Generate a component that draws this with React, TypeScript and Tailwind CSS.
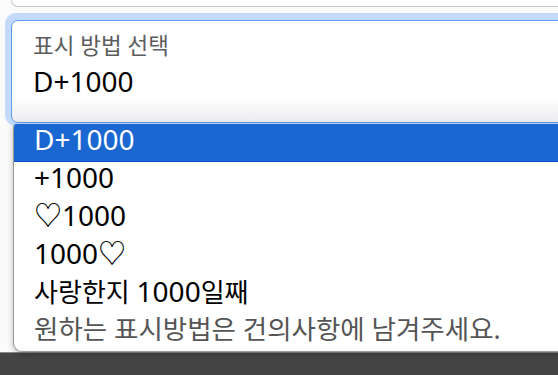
const OPTIONS = ["D+1000", "+1000", "♡1000", "1000♡", "사랑한지 1000일째"];

// Hangul runs are set a bit smaller so they sit next to the Latin digits like in the shot
function Txt({ text }: { text: string }) {
  const parts = text.match(/[\uac00-\ud7a3][\uac00-\ud7a3 .]*|[^\uac00-\ud7a3]+/g) || [];
  return (
    <>
      {parts.map((p, i) =>
        /[\uac00-\ud7a3]/.test(p) ? (
          <span key={i} className="text-[0.93em]">
            {p}
          </span>
        ) : (
          <span key={i}>{p}</span>
        )
      )}
    </>
  );
}

export default function App() {
  const selected = "D+1000";

  return (
    <div
      className="flex h-[375px] w-[558px] flex-col overflow-hidden bg-[#fbfbfb]"
      style={{ fontFamily: '"Noto Sans", "Noto Sans CJK KR", sans-serif' }}
    >
      {/* previous field, only its bottom edge is visible */}
      <div className="-mr-8 ml-[11px] h-[7px] shrink-0 rounded-b-[7px] border border-t-0 border-[#c3c7cc] bg-white" />

      {/* focused select */}
      <div className="-mr-8 ml-[5px] mt-[6px] shrink-0 rounded-[11px] bg-[#c3dafb] pl-[6px] pt-[7px] pb-[3px]">
        <div className="h-[103px] rounded-[7px] border border-[#5e9bf1] bg-gradient-to-b from-white from-75% to-[#ececef] pl-[21px] pt-[11px]">
          <div className="text-[22.5px] leading-[28px] text-[#5c5c5c]">표시 방법 선택</div>
          <div className="mt-[4px] text-[28px] leading-[34px] text-black">{selected}</div>
        </div>
      </div>

      {/* open option list */}
      <div className="relative z-10 -mr-8 -mt-[2px] ml-[13px] h-[228px] shrink-0 overflow-hidden rounded-b-[9px] rounded-tl-[3px] border-l border-b border-[#9a9a9a] bg-white shadow-[0_2px_6px_rgba(0,0,0,0.25)]">
        {OPTIONS.map((o) => (
          <div
            key={o}
            className={
              o === selected
                ? "h-[38px] whitespace-nowrap border-b border-[#0b4fc6] bg-[#1a67d2] pl-[20px] text-[28px] leading-[31px] text-white"
                : "h-[38px] whitespace-nowrap pl-[20px] text-[28px] leading-[30px] text-black"
            }
          >
            <Txt text={o} />
          </div>
        ))}
        <div className="h-[38px] whitespace-nowrap pl-[20px] text-[28.5px] leading-[29px] text-[#555]">
          <Txt text="원하는 표시방법은 건의사항에 남겨주세요." />
        </div>
      </div>

      {/* bottom bar */}
      <div className="mt-auto h-[23px] shrink-0 border-t border-[#8a8a8a] bg-[#444]" />
    </div>
  );
}
